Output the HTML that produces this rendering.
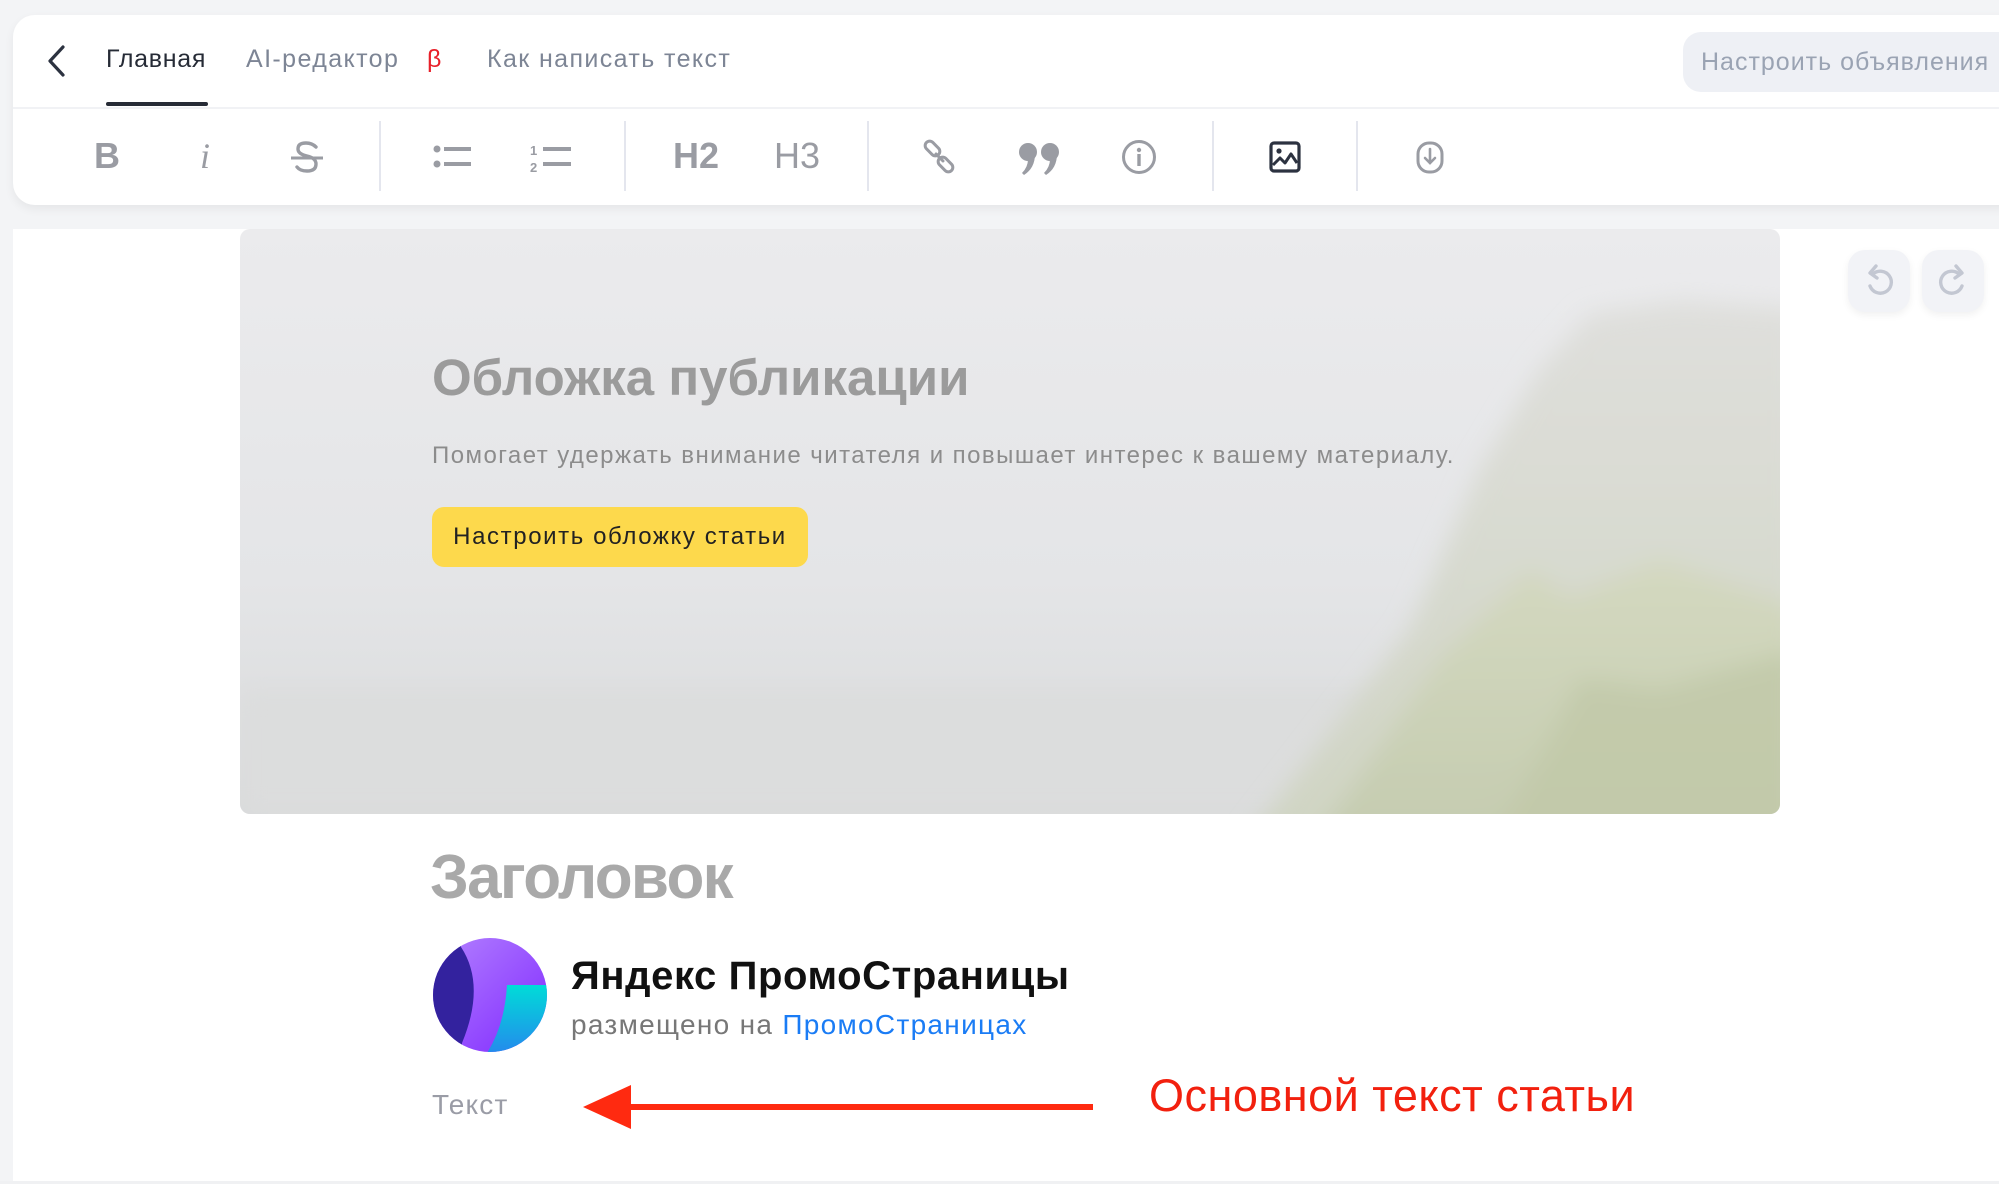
<!DOCTYPE html>
<html><head><meta charset="utf-8"><style>
*{margin:0;padding:0;box-sizing:border-box}
body{width:1999px;height:1184px;background:#f3f4f6;font-family:"Liberation Sans","DejaVu Sans",sans-serif;position:relative;overflow:hidden}
.abs{position:absolute}
.card{left:13px;top:15px;width:2010px;height:190px;background:#fff;border-radius:22px;box-shadow:0 4px 10px rgba(0,0,0,.06)}
.nav{font-size:25px;color:#7d8595;top:45px;letter-spacing:1.4px}
.sep{top:121px;width:2px;height:70px;background:#e4e6ee}
.tb{color:#9a9ca3;font-weight:bold;font-size:36px;top:136px;line-height:40px}
.panel{left:13px;top:229px;width:1986px;height:955px;background:#fff}
</style></head><body>
<div class="abs card"></div>
<svg class="abs" style="left:44px;top:44px" width="26" height="34" viewBox="0 0 26 34"><path d="M19 3 L6 17 L19 31" fill="none" stroke="#2c3240" stroke-width="3.2" stroke-linecap="round" stroke-linejoin="round"/></svg>
<div class="abs nav" style="left:106px;color:#262b36;letter-spacing:.7px">Главная</div>
<div class="abs" style="left:106px;top:102px;width:102px;height:4px;background:#262b36;border-radius:2px"></div>
<div class="abs nav" style="left:246px">AI-редактор</div>
<div class="abs nav" style="left:427px;color:#e8202a">β</div>
<div class="abs nav" style="left:487px">Как написать текст</div>
<div class="abs" style="left:13px;top:107px;width:1986px;height:2px;background:#f1f2f5"></div>
<div class="abs" style="left:1683px;top:32px;width:340px;height:60px;background:#eef0f5;border-radius:18px;color:#9aa3b3;font-size:25px;line-height:60px;padding-left:18px;white-space:nowrap;letter-spacing:1px">Настроить объявления</div>

<div class="abs tb" style="left:94px">B</div>
<div class="abs tb" style="left:200px;font-style:italic;font-weight:normal;font-family:'Liberation Serif',serif">i</div>
<svg class="abs" style="left:288px;top:140px" width="38" height="36" viewBox="0 0 38 36"><path d="M28 7 Q24 3 18 3 Q10 3 10 9 Q10 14 19 16 Q28 18 28 24 Q28 31 19 31 Q12 31 9 27" fill="none" stroke="#9a9ca3" stroke-width="3.4" stroke-linecap="round"/><path d="M3 18 H35" stroke="#9a9ca3" stroke-width="3"/></svg>
<div class="abs sep" style="left:379px"></div>
<svg class="abs" style="left:432px;top:140px" width="40" height="36" viewBox="0 0 40 36"><circle cx="5" cy="9" r="3.5" fill="#9a9ca3"/><circle cx="5" cy="24" r="3.5" fill="#9a9ca3"/><rect x="12" y="7" width="27" height="4" fill="#9a9ca3"/><rect x="12" y="22" width="27" height="4" fill="#9a9ca3"/></svg>
<svg class="abs" style="left:530px;top:140px" width="44" height="36" viewBox="0 0 44 36"><text x="0" y="15" font-size="13" font-weight="bold" fill="#9a9ca3" font-family="Liberation Sans">1</text><text x="0" y="32" font-size="13" font-weight="bold" fill="#9a9ca3" font-family="Liberation Sans">2</text><rect x="13" y="7" width="28" height="4" fill="#9a9ca3"/><rect x="13" y="22" width="28" height="4" fill="#9a9ca3"/></svg>
<div class="abs sep" style="left:624px"></div>
<div class="abs tb" style="left:673px">H2</div>
<div class="abs tb" style="left:774px;font-weight:normal">H3</div>
<div class="abs sep" style="left:867px"></div>
<svg class="abs" style="left:922px;top:139px" width="36" height="36" viewBox="0 0 36 36"><g fill="none" stroke="#9a9ca3" stroke-width="3" stroke-linecap="round"><rect x="2" y="5" width="17" height="9" rx="4.5" transform="rotate(45 10.5 9.5)"/><rect x="15" y="21" width="17" height="9" rx="4.5" transform="rotate(45 23.5 25.5)"/><path d="M14 15 L21 22"/></g></svg>
<svg class="abs" style="left:1018px;top:142px" width="44" height="36" viewBox="0 0 44 36"><g fill="#9a9ca3"><circle cx="10" cy="10" r="9"/><path d="M17 12 Q17 26 6 33 L4 31 Q10 25 10 17 Z"/><circle cx="32" cy="10" r="9"/><path d="M39 12 Q39 26 28 33 L26 31 Q32 25 32 17 Z"/></g></svg>
<svg class="abs" style="left:1121px;top:139px" width="36" height="36" viewBox="0 0 36 36"><circle cx="18" cy="18" r="15.5" fill="none" stroke="#9a9ca3" stroke-width="3"/><circle cx="18" cy="11" r="2.2" fill="#9a9ca3"/><rect x="16.3" y="15" width="3.4" height="12" fill="#9a9ca3"/></svg>
<div class="abs sep" style="left:1212px"></div>
<svg class="abs" style="left:1269px;top:141px" width="32" height="32" viewBox="0 0 32 32"><rect x="2" y="2" width="28" height="28" rx="3" fill="none" stroke="#2c3240" stroke-width="3.2"/><circle cx="10" cy="10" r="2.6" fill="#2c3240"/><path d="M4 24 L11 17 L16 22 L22 13 L28 22" fill="none" stroke="#2c3240" stroke-width="3" stroke-linejoin="round"/></svg>
<div class="abs sep" style="left:1356px"></div>
<svg class="abs" style="left:1416px;top:141px" width="28" height="33" viewBox="0 0 28 33"><rect x="2" y="2" width="24" height="29" rx="11" fill="none" stroke="#9a9ca3" stroke-width="3"/><path d="M14 8 V22 M9 17 L14 22 L19 17" fill="none" stroke="#9a9ca3" stroke-width="2.6" stroke-linecap="round"/></svg>

<div class="abs panel"></div>
<svg class="abs" style="left:240px;top:229px" width="1540" height="585" viewBox="0 0 1540 585">
<defs>
<linearGradient id="sky" x1="0" y1="0" x2="0" y2="1"><stop offset="0" stop-color="#ebebed"/><stop offset=".6" stop-color="#e4e5e7"/><stop offset="1" stop-color="#d9dadb"/></linearGradient>
<linearGradient id="m1" x1="0" y1="0" x2="0" y2="1"><stop offset="0" stop-color="#dfdfdc"/><stop offset="1" stop-color="#cfd4c2"/></linearGradient>
<linearGradient id="m2" x1="0" y1="0" x2="0" y2="1"><stop offset="0" stop-color="#d4d9c0"/><stop offset="1" stop-color="#c4cbaf"/></linearGradient>
<filter id="bl"><feGaussianBlur stdDeviation="12"/></filter>
<clipPath id="c"><rect width="1540" height="585" rx="10"/></clipPath>
</defs>
<g clip-path="url(#c)">
<rect width="1540" height="585" fill="url(#sky)"/>
<rect y="460" width="1540" height="125" fill="#dcdddd" filter="url(#bl)"/>
<g filter="url(#bl)">
<path d="M1000 620 L1170 400 L1240 240 L1300 140 L1350 85 L1440 72 L1560 80 L1560 620Z" fill="url(#m1)"/>
<path d="M1070 620 L1200 430 L1290 340 L1330 370 L1420 330 L1560 380 L1560 620Z" fill="url(#m2)"/>
<path d="M1250 620 L1340 450 L1420 460 L1560 420 L1560 620Z" fill="#c0c8a8" opacity=".8"/>
</g>
</g></svg>
<div class="abs" style="left:432px;top:348px;font-size:51px;color:#9b9b9b;font-weight:bold;letter-spacing:0">Обложка публикации</div>
<div class="abs" style="left:432px;top:442px;font-size:24px;color:#8c8c8c;letter-spacing:1.45px">Помогает удержать внимание читателя и повышает интерес к вашему материалу.</div>
<div class="abs" style="left:432px;top:507px;width:376px;height:60px;background:#fdd94c;border-radius:12px;font-size:24px;color:#222;line-height:60px;text-align:center;letter-spacing:1.6px">Настроить обложку статьи</div>

<div class="abs" style="left:1848px;top:250px;width:62px;height:62px;background:#f2f3f7;border-radius:17px;box-shadow:0 3px 8px rgba(0,0,0,.06)"></div>
<div class="abs" style="left:1922px;top:250px;width:62px;height:62px;background:#f2f3f7;border-radius:17px;box-shadow:0 3px 8px rgba(0,0,0,.06)"></div>
<svg class="abs" style="left:1862px;top:264px" width="34" height="34" viewBox="0 0 34 34"><path d="M11 10 A11 11 0 1 1 8 22" fill="none" stroke="#c3c7d2" stroke-width="3.4" stroke-linecap="round"/><path d="M14 2 L8 9 L15 14" fill="none" stroke="#c3c7d2" stroke-width="3.4" stroke-linecap="round" stroke-linejoin="round"/></svg>
<svg class="abs" style="left:1936px;top:264px" width="34" height="34" viewBox="0 0 34 34"><path d="M23 10 A11 11 0 1 0 26 22" fill="none" stroke="#c3c7d2" stroke-width="3.4" stroke-linecap="round"/><path d="M20 2 L26 9 L19 14" fill="none" stroke="#c3c7d2" stroke-width="3.4" stroke-linecap="round" stroke-linejoin="round"/></svg>

<div class="abs" style="left:430px;top:842px;font-size:62px;color:#a9a9a9;font-weight:bold;letter-spacing:-1.7px">Заголовок</div>
<svg class="abs" style="left:420px;top:925px" width="140" height="140" viewBox="0 0 140 140">
<defs><linearGradient id="p" x1="0" y1="0" x2="1" y2="1"><stop offset="0" stop-color="#b98cff"/><stop offset="1" stop-color="#7a1eff"/></linearGradient>
<linearGradient id="cy" x1="0" y1="0" x2="0" y2="1"><stop offset="0" stop-color="#00dcd8"/><stop offset="1" stop-color="#2a7cf0"/></linearGradient>
<clipPath id="cc"><circle cx="70" cy="70" r="57"/></clipPath></defs>
<g clip-path="url(#cc)"><rect width="140" height="140" fill="url(#p)"/>
<path d="M0 0 L41 0 L41 22 Q66 60 42 118 L42 140 L0 140Z" fill="#33229e"/>
<path d="M87 60 L140 60 L140 140 L58 140 Q84 110 87 60Z" fill="url(#cy)"/></g></svg>
<div class="abs" style="left:571px;top:954px;font-size:40px;font-weight:bold;color:#111;letter-spacing:.6px">Яндекс ПромоСтраницы</div>
<div class="abs" style="left:571px;top:1009px;font-size:28px;color:#777;letter-spacing:1.3px">размещено на <span style="color:#1a7cf5">ПромоСтраницах</span></div>
<div class="abs" style="left:432px;top:1089px;font-size:28px;color:#9a9ca6;letter-spacing:1.2px">Текст</div>
<svg class="abs" style="left:578px;top:1082px" width="520" height="50" viewBox="0 0 520 50"><path d="M50 22 H515 V28 H50Z" fill="#ff2a10"/><path d="M5 25 L53 3 L53 47Z" fill="#ff2a10"/></svg>
<div class="abs" style="left:1149px;top:1070px;font-size:45px;color:#f2200e;letter-spacing:.5px">Основной текст статьи</div>
<div class="abs" style="left:0;top:1181px;width:1999px;height:3px;background:#f0f1f3"></div>
</body></html>
